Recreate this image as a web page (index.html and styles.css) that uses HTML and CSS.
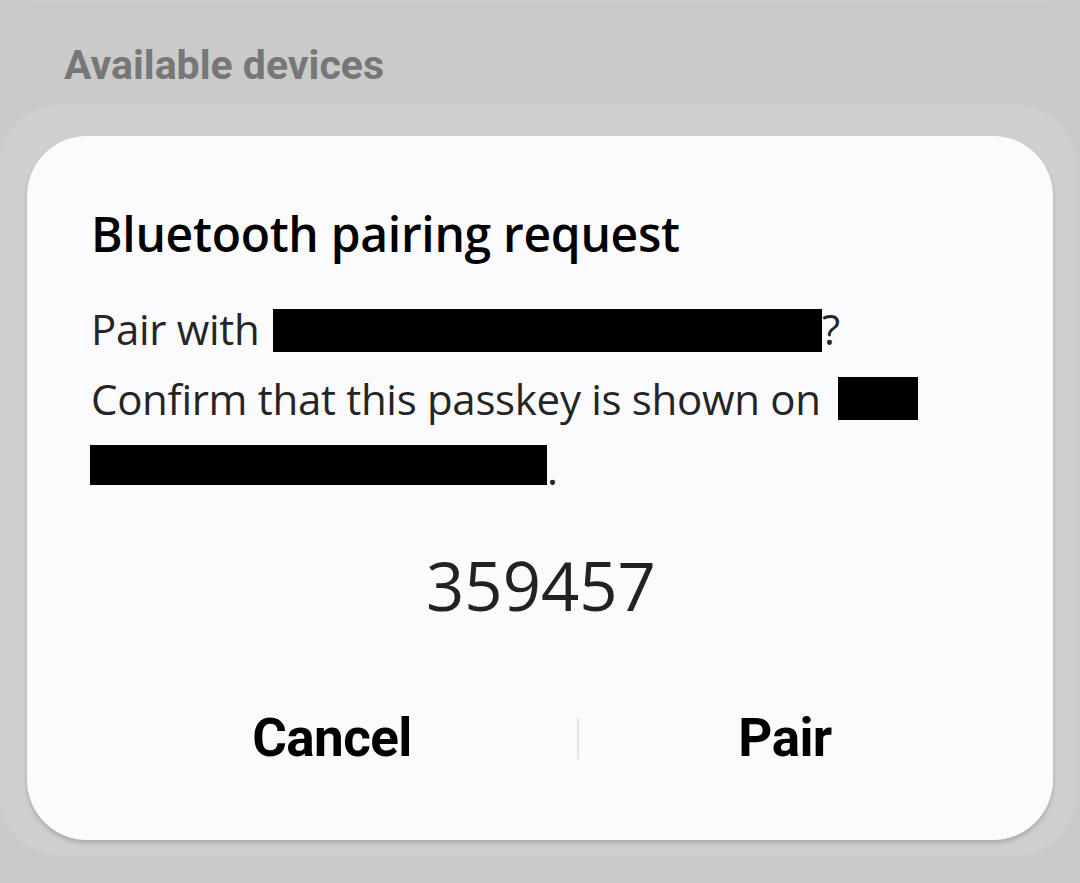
FILE: index.html
```html
<!DOCTYPE html>
<html>
<head>
<meta charset="utf-8">
<link rel="stylesheet" href="styles.css">
</head>
<body>
<div class="screen">
  <div class="top-card"></div>
  <h2 class="section">Available devices</h2>
  <div class="back-card">
    <div class="dialog">
      <h1 class="title">Bluetooth pairing request</h1>
      <p class="line">Pair with <span class="redact r1"></span>?</p>
      <p class="line">Confirm that this passkey is shown on <span class="redact r2"></span></p>
      <p class="line"><span class="redact r3"></span>.</p>
      <div class="passkey">359457</div>
      <div class="actions">
        <button class="btn btn-cancel">Cancel</button>
        <span class="divider"></span>
        <button class="btn btn-pair">Pair</button>
      </div>
    </div>
  </div>
</div>
</body>
</html>
```
FILE: styles.css
```css
* { box-sizing: border-box; }
html, body { margin: 0; padding: 0; }
body {
  width: 1080px;
  height: 883px;
  overflow: hidden;
  background: #cacaca;
  font-family: Roboto, "Liberation Sans", sans-serif;
}
.screen {
  width: 1080px;
  height: 883px;
}
.top-card {
  height: 3px;
  margin: 0 30px;
  background: #cdcdcd;
  border-radius: 0 0 30px 30px;
}
.section {
  margin: 0;
  padding: 38px 0 0 64px;
  height: 102px;
  font-size: 41px;
  font-weight: 700;
  color: #777777;
  letter-spacing: 0;
  line-height: 48px;
}
.back-card {
  margin: 0 4px 0 0;
  height: 750px;
  background: #cfcfd1;
  border-radius: 60px;
  padding: 31px 23px 0 27px;
}
.dialog {
  background: #fbfbfd;
  border-radius: 60px;
  height: 704px;
  padding: 68px 62px 0 64px;
  box-shadow: 0 3px 4px rgba(0,0,0,0.18);
}
.title {
  margin: 0 0 30px 0;
  font-family: "Open Sans", sans-serif;
  font-size: 48px;
  font-weight: 600;
  color: #000;
  line-height: 60px;
  letter-spacing: -0.3px;
}
.line {
  margin: 0;
  font-family: "Open Sans", sans-serif;
  font-size: 42px;
  line-height: 70px;
  color: #252525;
  letter-spacing: -0.3px;
  white-space: nowrap;
}
.redact {
  display: inline-block;
  background: #000;
  height: 43px;
}
.r1 { width: 549px; margin-left: 3px; vertical-align: -7px; }
.r2 { width: 80px; margin-left: 7px; vertical-align: -5px; }
.r3 { width: 457px; height: 40px; margin-left: -1px; vertical-align: 0; }
.passkey {
  text-align: center;
  margin-top: 41px;
  font-family: "Open Sans", sans-serif;
  font-size: 67px;
  color: #222;
  line-height: 80px;
}
.actions {
  display: flex;
  align-items: center;
  margin-top: 83px;
  margin-left: -4px;
  height: 60px;
}
.btn {
  background: none;
  border: none;
  padding: 0;
  font-family: Roboto, sans-serif;
  font-weight: 700;
  font-size: 53px;
  line-height: 60px;
  color: #000;
  letter-spacing: -0.6px;
}
.btn-cancel { flex: 0 0 490px; }
.btn-pair { flex: 1; }
.divider {
  flex: 0 0 2px;
  height: 41px;
  background: #e4e4e6;
}
```
